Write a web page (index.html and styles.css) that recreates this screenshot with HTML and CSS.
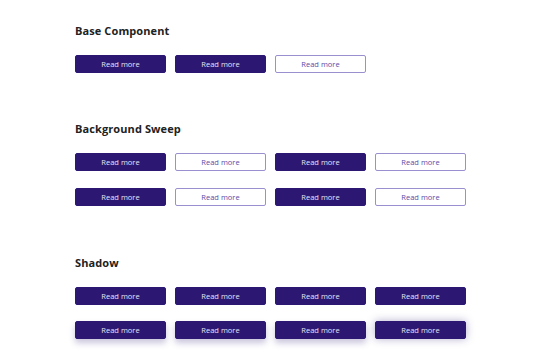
FILE: index.html
```html
<!DOCTYPE html>
<html lang="en">
<head>
    <meta charset="UTF-8">
    <title>Buttons</title>
    <link rel="stylesheet" href="styles.css">
</head>
<body>
    <section class="block">
        <h2>Base Component</h2>
        <div class="row">
            <a class="btn">Read more</a>
            <a class="btn">Read more</a>
            <a class="btn btn-outline">Read more</a>
        </div>
    </section>
    <section class="block sweep">
        <h2>Background Sweep</h2>
        <div class="row">
            <a class="btn">Read more</a>
            <a class="btn btn-outline">Read more</a>
            <a class="btn">Read more</a>
            <a class="btn btn-outline">Read more</a>
        </div>
        <div class="row">
            <a class="btn">Read more</a>
            <a class="btn btn-outline">Read more</a>
            <a class="btn">Read more</a>
            <a class="btn btn-outline">Read more</a>
        </div>
    </section>
    <section class="block shadow">
        <h2>Shadow</h2>
        <div class="row">
            <a class="btn">Read more</a>
            <a class="btn">Read more</a>
            <a class="btn">Read more</a>
            <a class="btn">Read more</a>
        </div>
        <div class="row">
            <a class="btn btn-shadow">Read more</a>
            <a class="btn btn-shadow">Read more</a>
            <a class="btn btn-shadow">Read more</a>
            <a class="btn btn-shadow-all">Read more</a>
        </div>
    </section>
</body>
</html>
```

FILE: styles.css
```css
body { font-family: "Open Sans", Arial, sans-serif; background: #fff; margin: 0; padding: 0 0 0 75px; }
h2 { font-size: 11px; font-weight: 700; color: #222; margin: 0; line-height: 14px; letter-spacing: 0.1px; }
.block { padding-top: 24px; }
.block h2 { margin-bottom: 17px; }
.sweep { padding-top: 32px; }
.shadow { padding-top: 33px; }
.row { display: flex; gap: 9px; margin-bottom: 17px; }
.shadow .row { margin-bottom: 16px; }
.btn { display: flex; align-items: center; justify-content: center; width: 91px; height: 18px; box-sizing: border-box; background: #2c1873; color: #e6e1f7; font-size: 7.5px; border-radius: 2px; border: 1px solid #2c1873; text-decoration: none; }
.btn-outline { background: #fff; color: #5a4ca8; border-color: #9a90d0; }
.btn-shadow { box-shadow: 0 4px 6px rgba(44, 24, 115, 0.25); }
.btn-shadow-all { box-shadow: 0 0 8px rgba(44, 24, 115, 0.35); }
```
